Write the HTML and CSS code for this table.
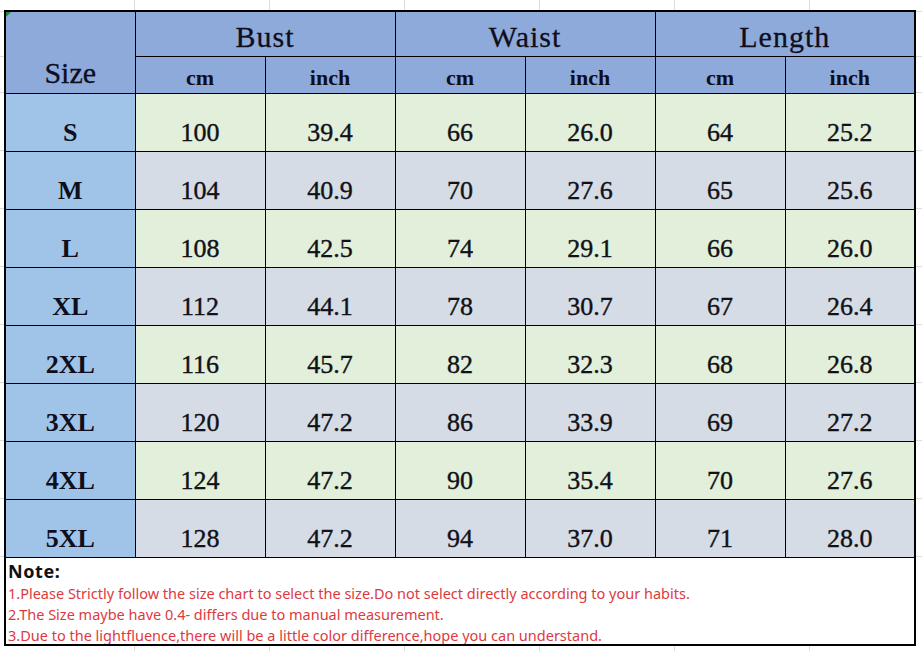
FILE: index.html
```html
<!DOCTYPE html>
<html lang="en">
<head>
<meta charset="utf-8">
<title>Size Chart</title>
<link rel="stylesheet" href="styles.css">
</head>
<body>
<div class="sheet">
  <table class="chart">
    <colgroup>
      <col class="c"><col class="c"><col class="c"><col class="c"><col class="c"><col class="c"><col class="c">
    </colgroup>
    <thead>
      <tr class="h1">
        <th class="size-head corner" rowspan="2">Size</th>
        <th colspan="2">Bust</th>
        <th colspan="2">Waist</th>
        <th colspan="2">Length</th>
      </tr>
      <tr class="h2">
        <th>cm</th><th>inch</th><th>cm</th><th>inch</th><th>cm</th><th>inch</th>
      </tr>
    </thead>
    <tbody>
      <tr class="odd"><th>S</th><td>100</td><td>39.4</td><td>66</td><td>26.0</td><td>64</td><td>25.2</td></tr>
      <tr class="even"><th>M</th><td>104</td><td>40.9</td><td>70</td><td>27.6</td><td>65</td><td>25.6</td></tr>
      <tr class="odd"><th>L</th><td>108</td><td>42.5</td><td>74</td><td>29.1</td><td>66</td><td>26.0</td></tr>
      <tr class="even"><th>XL</th><td>112</td><td>44.1</td><td>78</td><td>30.7</td><td>67</td><td>26.4</td></tr>
      <tr class="odd"><th>2XL</th><td>116</td><td>45.7</td><td>82</td><td>32.3</td><td>68</td><td>26.8</td></tr>
      <tr class="even"><th>3XL</th><td>120</td><td>47.2</td><td>86</td><td>33.9</td><td>69</td><td>27.2</td></tr>
      <tr class="odd"><th>4XL</th><td>124</td><td>47.2</td><td>90</td><td>35.4</td><td>70</td><td>27.6</td></tr>
      <tr class="even"><th>5XL</th><td>128</td><td>47.2</td><td>94</td><td>37.0</td><td>71</td><td>28.0</td></tr>
      <tr class="note-row">
        <td colspan="7" class="note">
          <div class="note-box">
            <p class="note-title">Note:</p>
            <p class="note-line">1.Please Strictly follow the size chart to select the size.Do not select directly according to your habits.</p>
            <p class="note-line">2.The Size maybe have 0.4- differs due to manual measurement.</p>
            <p class="note-line">3.Due to the lightfluence,there will be a little color difference,hope you can understand.</p>
          </div>
        </td>
      </tr>
    </tbody>
  </table>
</div>
</body>
</html>
```

FILE: styles.css
```css
html, body {
  margin: 0;
  padding: 0;
}

body {
  width: 922px;
  height: 651px;
  overflow: hidden;
  background-color: #ffffff;
  background-image:
    repeating-linear-gradient(to right, transparent 0, transparent 134px, #dcdcdc 134px, #dcdcdc 135px, transparent 135px, transparent 130px),
    linear-gradient(#dcdcdc, #dcdcdc),
    linear-gradient(#dcdcdc, #dcdcdc),
    linear-gradient(#dcdcdc, #dcdcdc),
    linear-gradient(#dcdcdc, #dcdcdc),
    linear-gradient(#dcdcdc, #dcdcdc),
    linear-gradient(#dcdcdc, #dcdcdc),
    linear-gradient(#dcdcdc, #dcdcdc),
    linear-gradient(#dcdcdc, #dcdcdc),
    linear-gradient(#dcdcdc, #dcdcdc),
    linear-gradient(#dcdcdc, #dcdcdc),
    linear-gradient(#dcdcdc, #dcdcdc);
  background-repeat: no-repeat;
  background-size:
    100% 100%,
    100% 1px, 100% 1px, 100% 1px, 100% 1px, 100% 1px, 100% 1px,
    100% 1px, 100% 1px, 100% 1px, 100% 1px, 100% 1px;
  background-position:
    0 0,
    0 11px, 0 56px, 0 92px, 0 150px, 0 208px, 0 266px,
    0 324px, 0 382px, 0 440px, 0 498px, 0 556px;
}

.sheet {
  padding: 10px 0 0 4px;
}

.chart {
  border-collapse: collapse;
  table-layout: fixed;
  width: 912px;
  border: 2px solid #000;
  color: #0e0e1c;
  font-family: "Liberation Serif", "Times New Roman", serif;
}

.chart .c {
  width: 130px;
}

.chart th,
.chart td {
  border: 1px solid #000;
  text-align: center;
  vertical-align: bottom;
  padding: 0;
  overflow: hidden;
  white-space: nowrap;
}

.h1 th,
.h2 th {
  background: #8eaadb;
  font-weight: normal;
}

.h1 {
  height: 45px;
}

.h1 th {
  font-size: 30px;
  line-height: 30px;
  letter-spacing: 1px;
  padding-bottom: 4px;
  -webkit-text-stroke: 0.3px #0e0e1c;
}

.h1 .size-head {
  padding-bottom: 5px;
  letter-spacing: 0;
}

.corner {
  position: relative;
}

.corner::before {
  content: "";
  position: absolute;
  left: 0;
  top: 0;
  border-style: solid;
  border-width: 5px 5px 0 0;
  border-color: #1e8c3a transparent transparent transparent;
}

.h2 {
  height: 37px;
}

.h2 th {
  font-size: 22px;
  line-height: 22px;
  font-weight: bold;
  padding-bottom: 4px;
}

.chart tr.odd,
.chart tr.even {
  height: 58px;
}

.chart tr.odd td {
  background: #e2efda;
}

.chart tr.even td {
  background: #d6dce5;
}

.chart tbody th,
.chart tbody td {
  font-size: 26px;
  line-height: 26px;
  padding-bottom: 5px;
}

.chart tbody td {
  color: #111118;
  -webkit-text-stroke: 0.4px #111118;
}

.chart tbody th {
  background: #9fc4e8;
  font-weight: bold;
}

.note-row {
  height: 86px;
}

.chart td.note {
  background: #ffffff;
  text-align: left;
  vertical-align: top;
  padding: 0;
  -webkit-text-stroke: 0;
}

.note-box {
  height: 86px;
  overflow: hidden;
  padding-left: 2px;
  padding-top: 1px;
  box-sizing: border-box;
}

.note p {
  margin: 0;
}

.note-title {
  font-family: "Noto Sans", "Liberation Sans", sans-serif;
  font-weight: bold;
  font-size: 18px;
  line-height: 24px;
  letter-spacing: 0.6px;
  color: #111;
}

.note-line {
  font-family: "Noto Sans", "Liberation Sans", sans-serif;
  font-size: 14.5px;
  line-height: 21px;
  color: #dd3a3e;
}
```
